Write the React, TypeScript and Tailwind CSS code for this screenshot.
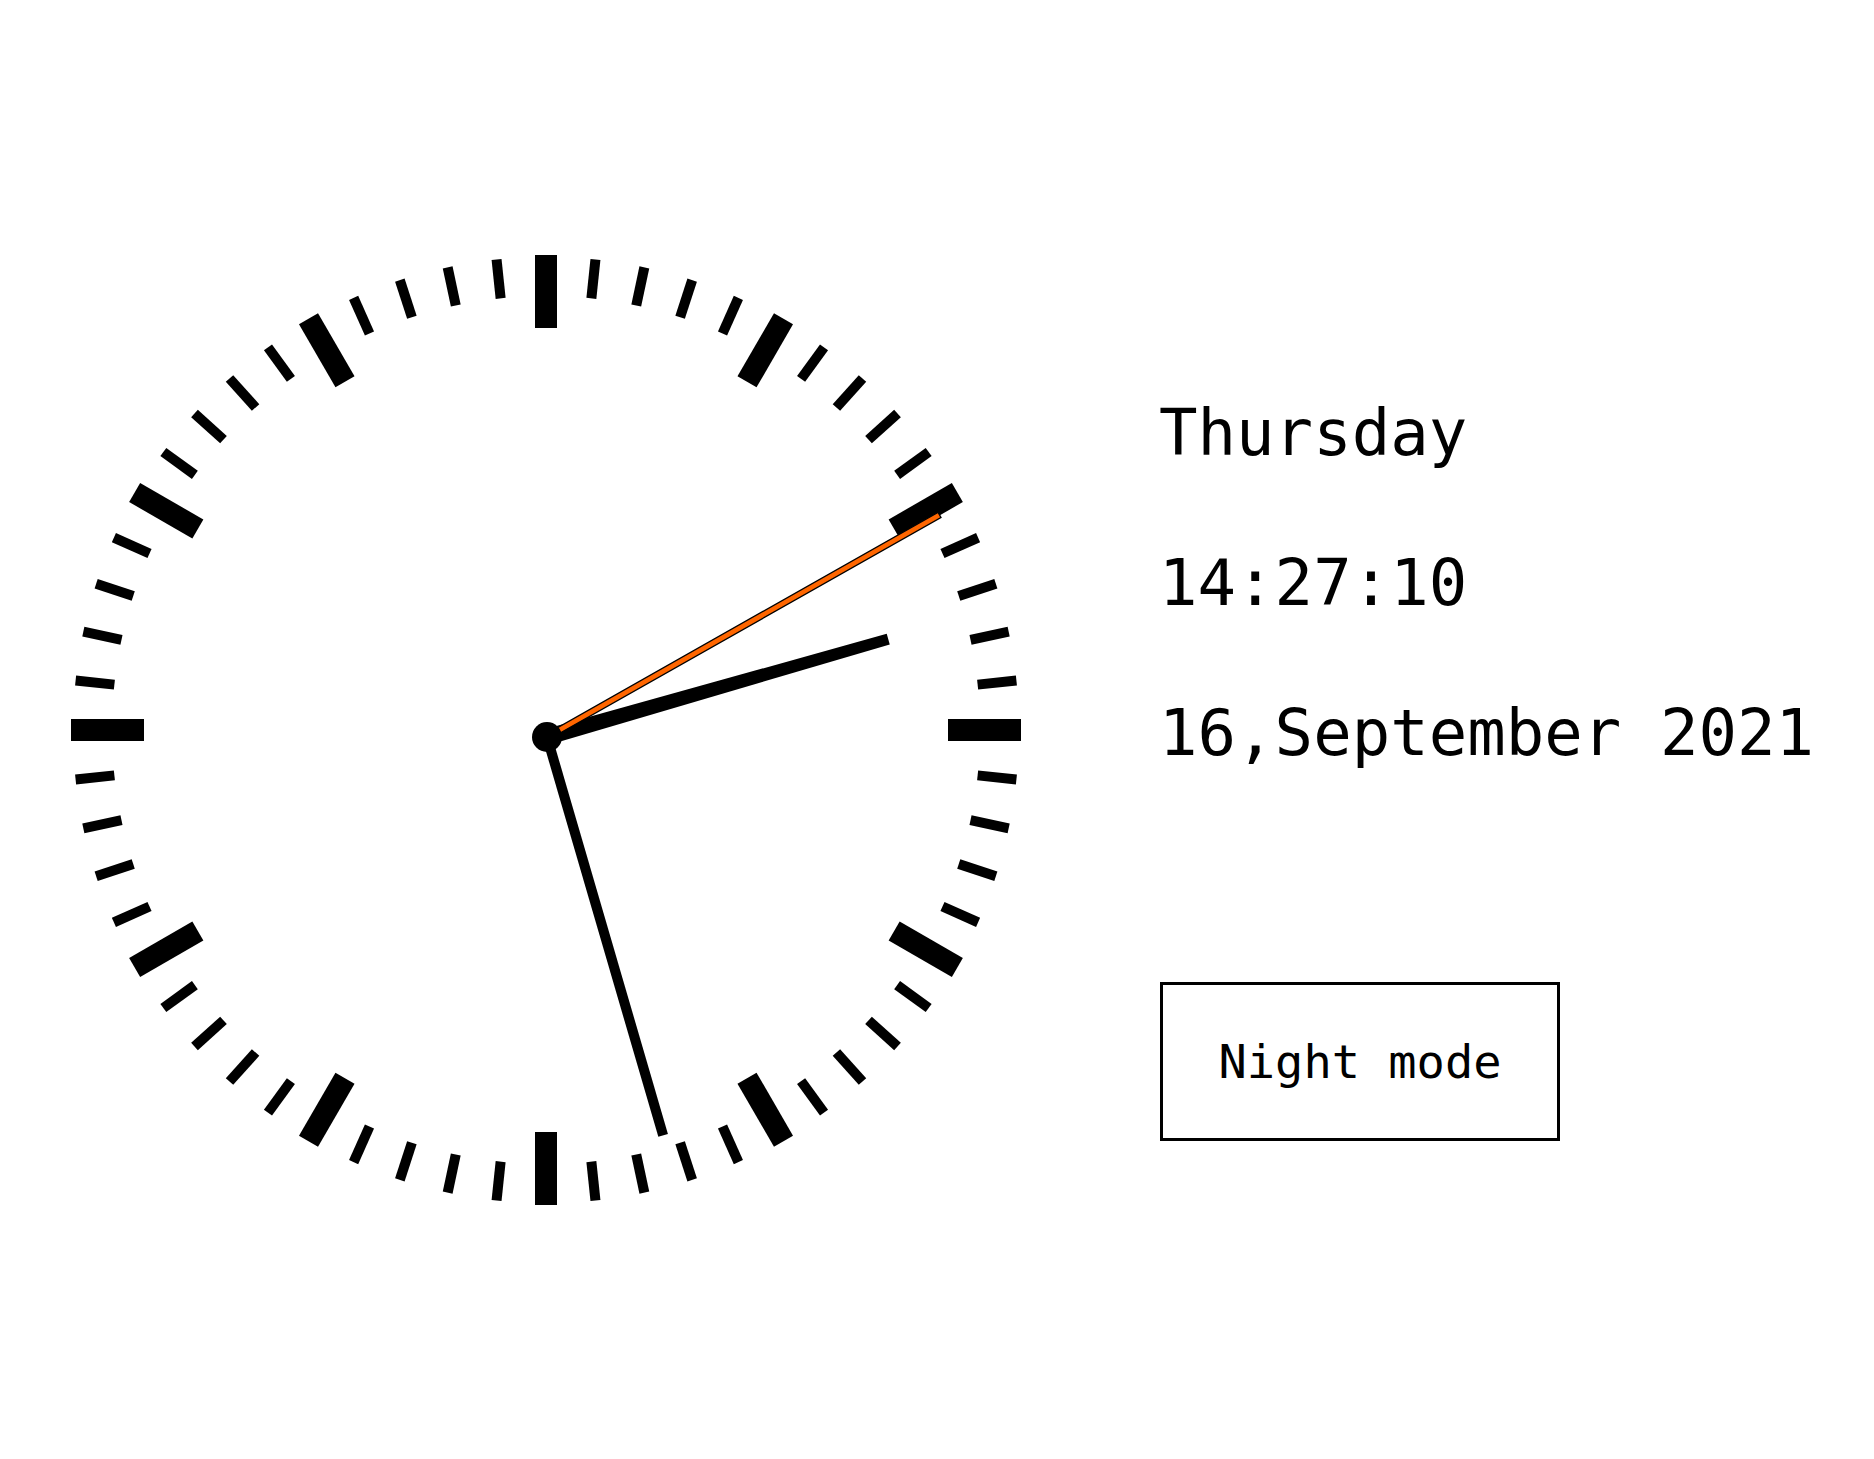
import React from "react"

const CX = 480
const CY = 480
// hands pivot sits a few px below the dial centre, as in the picture
const PX = 481
const PY = 487

const ticks = Array.from({ length: 60 }, (_, i) => i)

function Clock() {
  return (
    <svg width="960" height="960" viewBox="0 0 960 960">
      {ticks.map((i) => {
        const major = i % 5 === 0
        const outer = major ? 475 : 473
        const len = major ? 73 : 39
        const w = major ? 22 : 10
        return (
          <rect
            key={i}
            x={CX - w / 2}
            y={CY - outer}
            width={w}
            height={len}
            fill="#000"
            transform={`rotate(${i * 6} ${CX} ${CY})`}
          />
        )
      })}

      {/* minute hand */}
      <rect x={PX - 5} y={PY - 415} width={10} height={415} fill="#000" transform={`rotate(163.75 ${PX} ${PY})`} />

      {/* hour hand, tapered */}
      <polygon
        points={`${PX - 8},${PY} ${PX + 8},${PY} ${PX + 5.5},${PY - 355} ${PX - 5.5},${PY - 355}`}
        fill="#000"
        transform={`rotate(74 ${PX} ${PY})`}
      />

      {/* second hand */}
      <rect
        x={PX - 3}
        y={PY - 451}
        width={6}
        height={451}
        fill="#ff6600"
        stroke="#000"
        strokeWidth={1.3}
        transform={`rotate(60.5 ${PX} ${PY})`}
      />

      <circle cx={PX} cy={PY} r={15} fill="#000" />
    </svg>
  )
}

export default function App() {
  return (
    <div className="min-h-[1459px] w-full bg-white flex items-start text-black">
      <div className="ml-[66px] mt-[250px] shrink-0">
        <Clock />
      </div>

      <div className="ml-[133px] mt-[358px] flex flex-col items-start font-['DejaVu_Sans_Mono',monospace]">
        <div className="text-[64px] leading-[150px] whitespace-nowrap">Thursday</div>
        <div className="text-[64px] leading-[150px] whitespace-nowrap">14:27:10</div>
        <div className="text-[64px] leading-[150px] whitespace-nowrap">16,September 2021</div>

        <button className="mt-[174px] ml-[1px] w-[400px] h-[159px] border-[3px] border-black bg-white text-[47px] leading-none flex items-center justify-center whitespace-nowrap font-['DejaVu_Sans_Mono',monospace]">
          Night mode
        </button>
      </div>
    </div>
  )
}
